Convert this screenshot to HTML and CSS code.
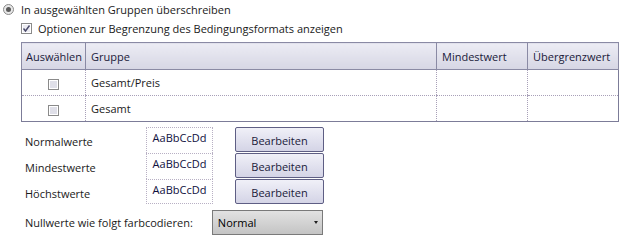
FILE: index.html
```html
<!DOCTYPE html>
<html lang="de">
<head>
    <meta charset="UTF-8">
    <title>Bedingungsformat</title>
    <link rel="stylesheet" href="styles.css">
</head>
<body>
    <div class="option-row">
        <span class="radio"><span class="radio-dot"></span></span>
        <span>In ausgewählten Gruppen überschreiben</span>
    </div>

    <div class="option-row sub">
        <span class="check checked">
            <svg width="9" height="9" viewBox="0 0 9 9"><path d="M1.5 4.5 L3.5 7 L7.5 1.5" fill="none" stroke="#4a4a6a" stroke-width="1.4"/></svg>
        </span>
        <span>Optionen zur Begrenzung des Bedingungsformats anzeigen</span>
    </div>

    <table class="groups">
        <thead>
            <tr>
                <th class="col-select">Auswählen</th>
                <th class="col-group">Gruppe</th>
                <th class="col-min">Mindestwert</th>
                <th class="col-max">Übergrenzwert</th>
            </tr>
        </thead>
        <tbody>
            <tr>
                <td class="center"><span class="check small"></span></td>
                <td>Gesamt/Preis</td>
                <td></td>
                <td></td>
            </tr>
            <tr>
                <td class="center"><span class="check small"></span></td>
                <td>Gesamt</td>
                <td></td>
                <td></td>
            </tr>
        </tbody>
    </table>

    <div class="formats">
        <div class="format-label">Normalwerte</div>
        <div class="sample">AaBbCcDd</div>
        <button class="edit">Bearbeiten</button>

        <div class="format-label">Mindestwerte</div>
        <div class="sample">AaBbCcDd</div>
        <button class="edit">Bearbeiten</button>

        <div class="format-label">Höchstwerte</div>
        <div class="sample last">AaBbCcDd</div>
        <button class="edit">Bearbeiten</button>
    </div>

    <div class="null-row">
        <span>Nullwerte wie folgt farbcodieren:</span>
        <div class="dropdown">
            <span>Normal</span>
            <span class="arrow"></span>
        </div>
    </div>
</body>
</html>
```

FILE: styles.css
```css
body {
    margin: 0;
    font-family: "Open Sans", "Noto Sans", sans-serif;
    font-size: 11px;
    color: #1a1a1a;
    background: #ffffff;
    width: 629px;
    height: 248px;
    overflow: hidden;
}
.option-row {
    display: flex;
    align-items: center;
    gap: 7px;
    height: 18px;
    padding-left: 3px;
}
.option-row.sub {
    padding-left: 21px;
    gap: 6px;
    margin-top: 1px;
}
.radio {
    width: 9px;
    height: 9px;
    border: 1px solid #8a8a8a;
    border-radius: 50%;
    background: #e8e8e8;
    display: flex;
    align-items: center;
    justify-content: center;
}
.radio-dot {
    width: 5px;
    height: 5px;
    border-radius: 50%;
    background: #5a5a5a;
}
.check {
    width: 9px;
    height: 9px;
    border: 1px solid #8a8a8a;
    background: #ececf2;
    display: inline-flex;
    align-items: center;
    justify-content: center;
    box-shadow: inset 0 0 0 1px #ffffff;
}
.check.small {
    background: #dfdfe8;
}
.groups {
    margin: 5px 0 0 21px;
    width: 598px;
    border-collapse: collapse;
    border: 1px solid #7c7c98;
    table-layout: fixed;
}
.groups th {
    height: 26px;
    padding: 0 0 0 5px;
    text-align: left;
    font-weight: normal;
    color: #1a1a3a;
    background: linear-gradient(#ececf4, #d6d6e4);
    border: 1px solid #8a8aa4;
}
.groups th.col-select {
    padding-left: 4px;
}
.col-select { width: 59px; }
.col-group { width: 345px; }
.col-min { width: 85px; }
.groups td {
    height: 25px;
    padding: 0 0 0 5px;
    border-left: 1px dotted #a8a0b8;
    border-bottom: 1px dotted #a8a0b8;
}
.groups td.center {
    text-align: center;
    padding: 0;
}
.groups td .check {
    vertical-align: middle;
}
.formats {
    display: grid;
    grid-template-columns: 121px 67px 89px;
    grid-auto-rows: 26px;
    margin: 5px 0 0 25px;
}
.format-label {
    line-height: 30px;
}
.sample {
    border: 1px dotted #b8b0c4;
    border-bottom: none;
    color: #101040;
    text-align: center;
    line-height: 20px;
}
.sample.last {
    border-bottom: 1px dotted #b8b0c4;
    height: 23px;
}
.edit {
    margin-left: 22px;
    width: 89px;
    height: 25px;
    font-family: inherit;
    font-size: 11px;
    color: #1a1a3a;
    border: 1px solid #5e5e84;
    border-radius: 2px;
    background: linear-gradient(#f0f0f8, #d4d4e6);
    padding: 2px 0 0 0;
}
.null-row {
    display: flex;
    align-items: center;
    gap: 19px;
    margin: 5px 0 0 25px;
}
.dropdown {
    width: 100px;
    height: 23px;
    border: 1px solid #7a7a7a;
    background: linear-gradient(#e2e2e2, #c4c4c4);
    display: flex;
    align-items: center;
    justify-content: space-between;
    padding: 0 4px 0 5px;
    color: #000000;
}
.arrow {
    width: 0;
    height: 0;
    border-left: 2px solid transparent;
    border-right: 2px solid transparent;
    border-top: 3px solid #202020;
}
```
